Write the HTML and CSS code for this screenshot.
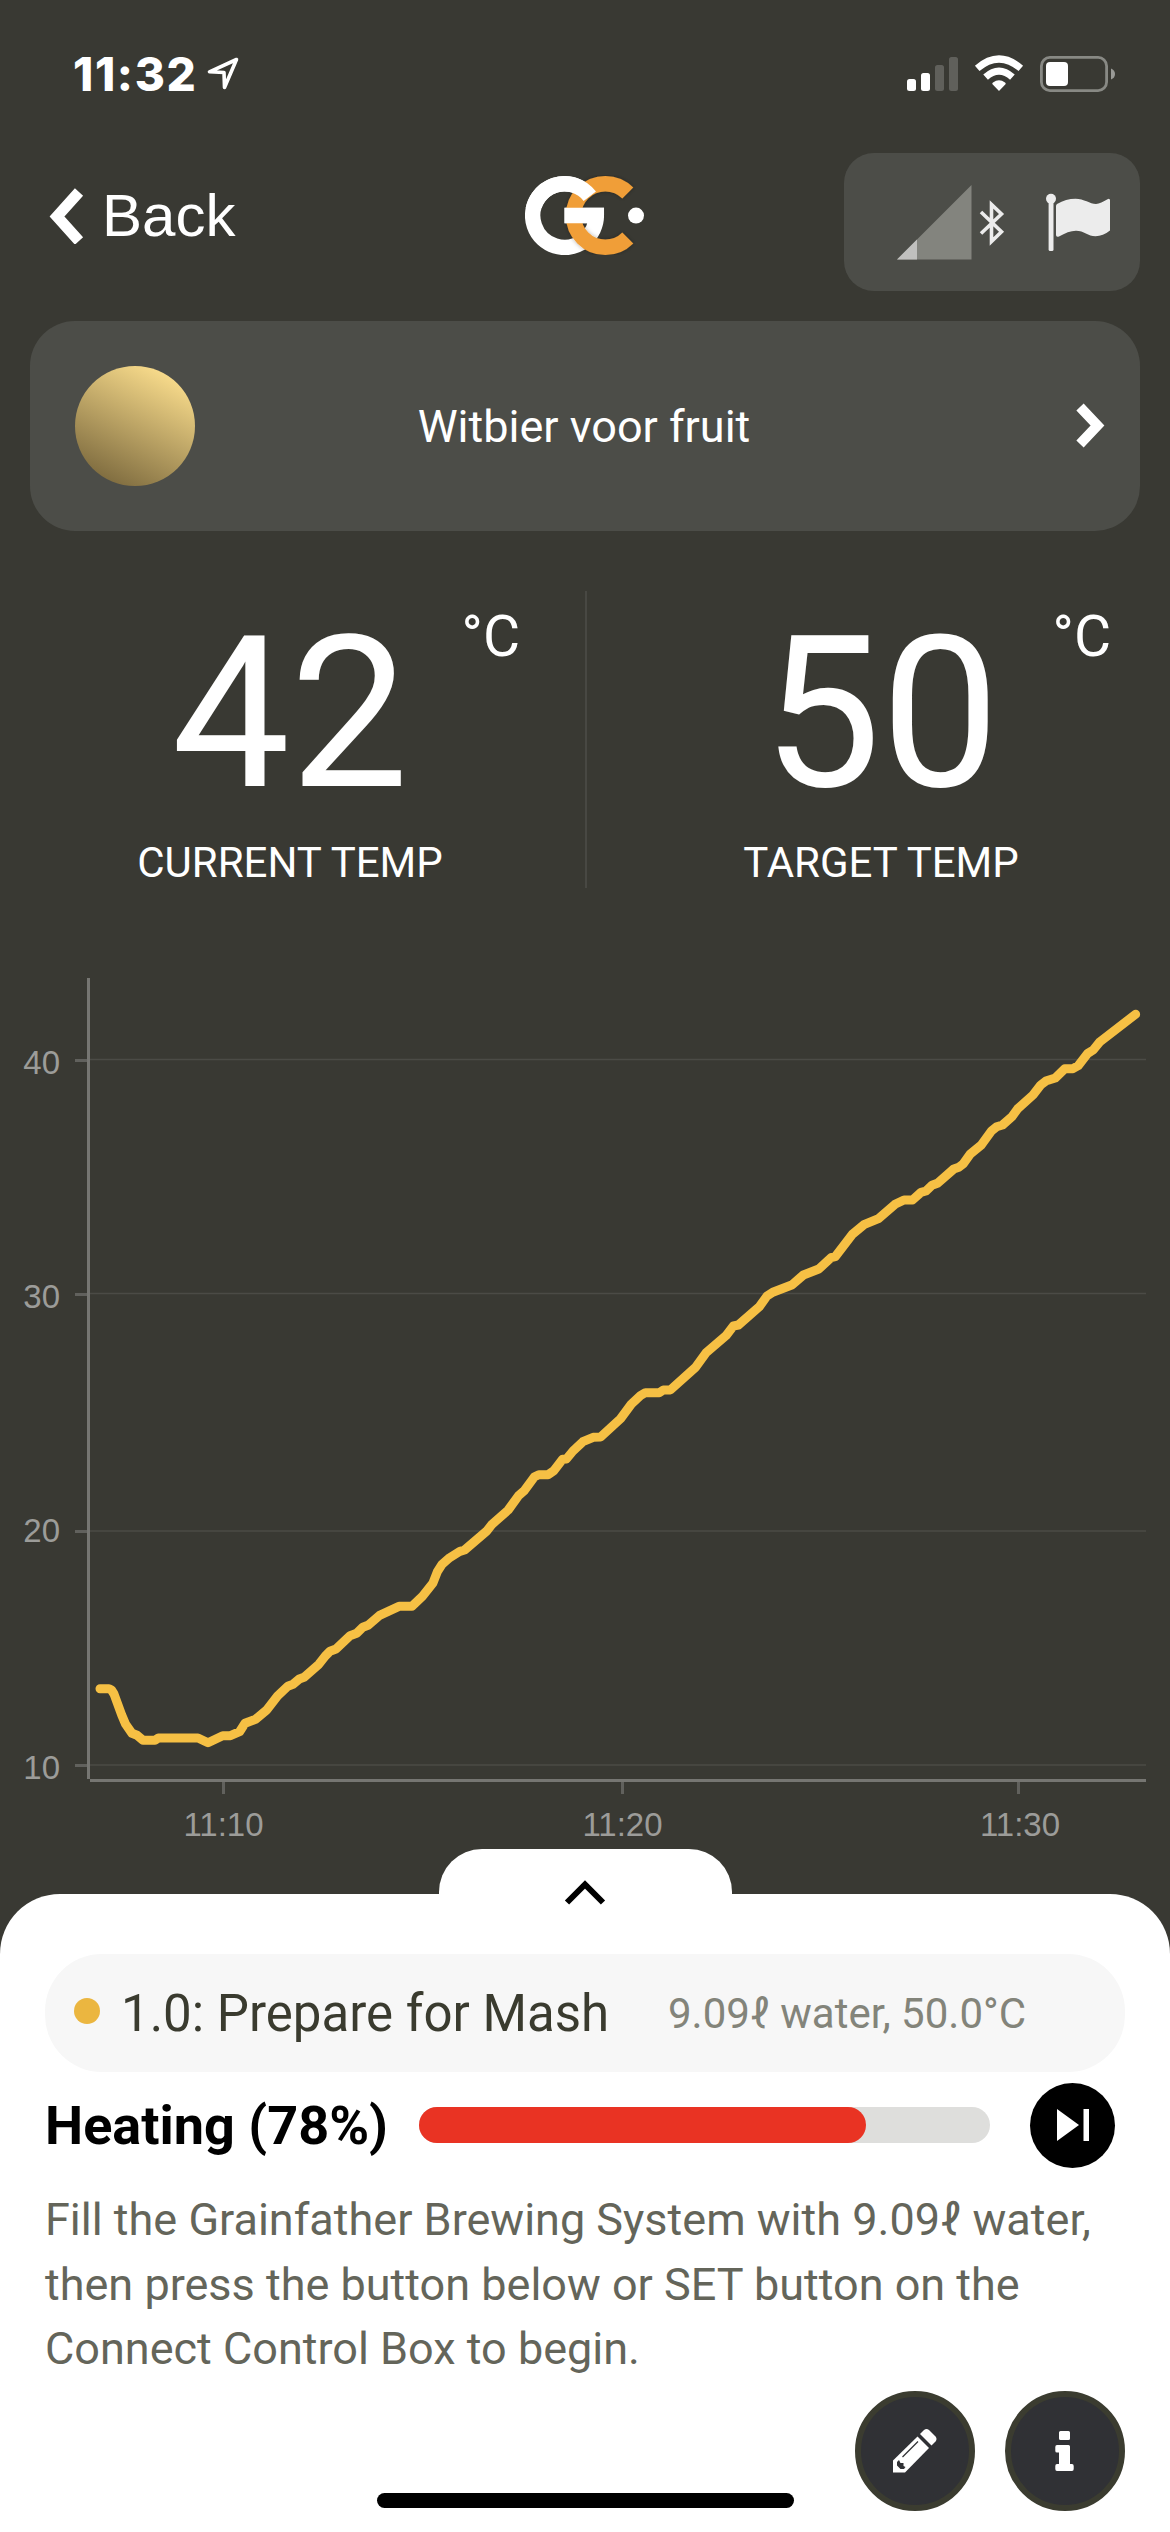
FILE: index.html
```
<!DOCTYPE html>
<html lang="en">
<head>
    <meta charset="UTF-8">
    <meta name="viewport" content="width=device-width, initial-scale=1.0">
    <title>Brew Session</title>
    <link rel="stylesheet" href="styles.css">
</head>
<body>
    <div class="status-bar">
        <div class="clock">
            <span class="time">11:32</span>
            <svg class="location" width="32" height="33" viewBox="0 0 32 33"><path d="M29.5 2.5 2.5 14.8 17 15.5 17.5 30.5Z" fill="none" stroke="#fff" stroke-width="3.6" stroke-linejoin="round"/></svg>
        </div>
        <svg class="status-icons" width="210" height="38" viewBox="906 55 210 38">
            <g fill="#fff">
                <rect x="907" y="79" width="9" height="12" rx="2.5"/>
                <rect x="921" y="73" width="9" height="18" rx="2.5"/>
                <rect x="935" y="65" width="9" height="26" rx="2.5" opacity=".2"/>
                <rect x="949" y="57" width="9" height="34" rx="2.5" opacity=".2"/>
                <path d="M999 91 992.5 84.2Q991.8 83.2 993 82.4Q999 78.2 1005 82.4Q1006.2 83.2 1005.5 84.2Z"/>
            </g>
            <path d="M985.6 77.2Q999 65.2 1012.4 77.2M977.2 68.4Q999 49.6 1020.8 68.4" fill="none" stroke="#fff" stroke-width="7"/>
            <rect x="1041.4" y="57.4" width="65.2" height="33.2" rx="8.5" fill="none" stroke="#888984" stroke-width="2.8"/>
            <rect x="1046" y="62" width="22" height="24" rx="4" fill="#fff"/>
            <path d="M1111 68.5Q1115 70 1115 74T1111 79.5Z" fill="#999a96"/>
        </svg>
    </div>

    <div class="header">
        <a class="back">
            <svg width="36" height="56" viewBox="0 0 36 56"><path d="M31 4 9 28.500 31 53" fill="none" stroke="#fff" stroke-width="11"/></svg>
            <span>Back</span>
        </a>
        <svg class="logo" width="120" height="80" viewBox="525 175 120 80">
            <defs>
                <filter id="shade" x="-20%" y="-20%" width="140%" height="140%">
                    <feDropShadow dx="0" dy="0" stdDeviation="2" flood-color="#000" flood-opacity=".3"/>
                </filter>
                <clipPath id="ring-top"><rect x="525" y="175" width="120" height="33"/></clipPath>
            </defs>
            <path d="M564.5 215.5H596.3A31.8 31.8 0 1 1 589.8 196.3" fill="none" stroke="#fff" stroke-width="15.5"/>
            <path filter="url(#shade)" d="M627.8 193A31.8 31.8 0 1 0 627.8 238" fill="none" stroke="#f09e38" stroke-width="15.5"/>
            <path clip-path="url(#ring-top)" d="M532.7 215.5A31.8 31.8 0 0 1 589.8 196.3" fill="none" stroke="#fff" stroke-width="15.5"/>
            <path d="M564.5 207.8H604V217L600 223.3H564.5Z" fill="#fff"/>
            <circle cx="636" cy="215.6" r="8" fill="#fff"/>
        </svg>
        <div class="connection">
            <svg width="270" height="80" viewBox="870 180 270 80">
                <path d="M897 259.5 971.5 185V259.5Z" fill="#83847e"/>
                <path d="M897 259.5 917 239.5V259.5Z" fill="#c0c0be"/>
                <path d="M981 212 1001.5 231.8 991.5 241.5V204.5L1001.5 214 981 233.5" fill="none" stroke="#ececec" stroke-width="3.6"/>
                <g fill="#ececec">
                    <circle cx="1051" cy="198.8" r="5"/>
                    <rect x="1048.6" y="199" width="4.9" height="52" rx="1.5"/>
                    <path d="M1056 206Q1056 204.8 1057 204Q1066 198.8 1075.5 198.8C1084 198.8 1090 204 1096 204Q1101 203.5 1107.5 199.3Q1110 198 1110 200.5V230.5Q1103 236.2 1095.5 236.2C1088 236.2 1084 230.7 1076 230.7Q1068 231 1059 236.5Q1056 237.5 1056 235Z"/>
                </g>
            </svg>
        </div>
    </div>

    <div class="recipe">
        <div class="beer"></div>
        <div class="recipe-name">Witbier voor fruit</div>
        <svg width="32" height="46" viewBox="0 0 32 46"><path d="M6 4 23.500 22.500 6 41" fill="none" stroke="#fff" stroke-width="10"/></svg>
    </div>

    <div class="temps">
        <div class="temp current">
            <div class="value">42</div>
            <div class="unit">°C</div>
            <div class="label">CURRENT TEMP</div>
        </div>
        <div class="temp target">
            <div class="value">50</div>
            <div class="unit">°C</div>
            <div class="label">TARGET TEMP</div>
        </div>
    </div>

    <svg class="chart" width="1170" height="879" viewBox="0 970 1170 879">
        <!-- grid -->
        <path d="M90 1059.5H1146M90 1293.5H1146M90 1531H1146M90 1765H1146" stroke="#4b4b46" stroke-width="1.5"/>
        <!-- ticks -->
        <path d="M75 1060.5H90M75 1294.5H90M75 1531.5H90M75 1765.5H90M223.5 1779V1794M622.5 1779V1794M1018.5 1779V1794" stroke="#61615d" stroke-width="3"/>
        <!-- axes -->
        <path d="M88.5 978V1779M90 1780.5H1146" stroke="#767672" stroke-width="3"/>
        <g class="axis-y">
            <text x="60" y="1074">40</text>
            <text x="60" y="1308">30</text>
            <text x="60" y="1542">20</text>
            <text x="60" y="1779">10</text>
        </g>
        <g class="axis-x">
            <text x="223.5" y="1836">11:10</text>
            <text x="622.5" y="1836">11:20</text>
            <text x="1020" y="1836">11:30</text>
        </g>
        <polyline class="temp-line" points="
            100,1688.7 109,1688.7 111.5,1690 114,1694 121.7,1715 125.5,1724 132,1733.3 137,1735.3 143,1740.3 155,1740.3
            158.4,1738 198,1738 208,1742.7 222.7,1735.7 230.4,1735.7 239.6,1731.7 245,1723.3 249,1721.7 255.6,1719.3 266.7,1710
            277.5,1696 287.8,1686.3 293,1684.3 299.3,1679 304,1677.3 318.8,1664.3 325.3,1656 330,1651.3 336,1649 350,1635.7
            356.7,1633.3 362.8,1627.3 368,1625.3 379.6,1615.3 399,1606.3 412,1606.3 422.5,1596.3 432.8,1583.3 437.4,1571.7 442,1564.3
            449.7,1557.7 460,1551.3 464.6,1550 486.8,1531 492,1524.3 508.2,1510 518.6,1495.7 524.3,1490.7 534.6,1476.7 538.8,1474.7
            548,1474.7 553.8,1470.7 562.6,1459.3 566.4,1459 573,1451 582.9,1441.7 593.2,1437.3 600.6,1437 620.5,1418.7 631.2,1404.3
            640.8,1395.3 645.4,1392.7 659.2,1392.7 663.4,1390 670.3,1390 695.5,1367.3 706.2,1352.7 726,1335.7 733.4,1326 738.4,1325
            759.4,1306.7 767,1296 772.8,1292.3 792.3,1284.7 803.4,1275 818.8,1269 831,1257.7 835.2,1256.7 852.4,1234.3 863.9,1224.7
            878.5,1218.7 895,1204.3 904,1200 912.5,1200 921,1192.3 926,1191 932,1185.3 937.4,1183.3 953.8,1169 958.8,1167.3
            963.4,1163.7 970,1154.3 981,1145.3 991.7,1130.7 996.7,1126.7 1002.5,1125 1012,1116.7 1017.8,1108.7 1033,1095 1040.7,1085
            1046.5,1080.7 1055.3,1078 1064.8,1068.7 1072.9,1068.7 1078.2,1065.7 1087.8,1053.3 1093.2,1050 1100,1041.7 1135.6,1014.3"/>
    </svg>

    <div class="sheet-tab">
        <svg width="42" height="26" viewBox="0 0 42 26"><path d="M3 22.5 21 4.5 39 22.5" fill="none" stroke="#000" stroke-width="6"/></svg>
    </div>
    <div class="sheet">
        <div class="step">
            <span class="dot"></span>
            <span class="step-name">1.0: Prepare for Mash</span>
            <span class="step-info">9.09ℓ water, 50.0°C</span>
        </div>
        <div class="heating">
            <span class="heating-label">Heating (78%)</span>
            <div class="progress"><div class="progress-fill" style="width: 78.2%"></div></div>
            <button class="skip">
                <svg width="34" height="32" viewBox="0 0 34 32"><path d="M1 0 23 16 1 32ZM27.5 0H33V32H27.5Z" fill="#fff"/></svg>
            </button>
        </div>
        <p class="instructions">Fill the Grainfather Brewing System with 9.09ℓ water, then press the button below or SET button on the Connect Control Box to begin.</p>
        <div class="actions">
            <button class="round">
                <svg width="44" height="44" viewBox="0 0 44 44">
                    <path d="M0 31.5 24.5 7.5 36 19 12 43.5H0Z" fill="#fff"/>
                    <path d="M27 5 31 1Q33.5-1 36 1L42.5 7.5Q44.5 10 42.5 12.5L38.5 16.5Z" fill="#fff"/>
                    <path d="M9.5 28 25 12.5" stroke="#303135" stroke-width="1.3"/>
                    <path d="M4 33 6 31 7.5 34H10.5V37L12.500 38 11 40H7.5L4 36.5Z" fill="#303135"/>
                </svg>
            </button>
            <button class="round">
                <svg width="20" height="42" viewBox="0 0 20 42">
                    <path d="M5.5 1H13.5Q15 1 15 2.5V8.5Q15 10 13.5 10H5.5Q4 10 4 8.5V2.5Q4 1 5.5 1ZM2 15H13.5Q15 15 15 16.5V34H17Q18.7 34 18.7 36V39Q18.7 41 17 41H2Q.3 41 .3 39V36Q.3 34 2 34H4V22.5H2Q.3 22.5 .3 21V17Q.3 15 2 15Z" fill="#fff"/>
                </svg>
            </button>
        </div>
        <div class="home-indicator"></div>
    </div>
</body>
</html>
```
FILE: styles.css
```
* {
    box-sizing: border-box;
    margin: 0;
    padding: 0;
}

body {
    width: 1170px;
    height: 2532px;
    overflow: hidden;
    display: flex;
    flex-direction: column;
    background: #393933;
    color: #fff;
    font-family: Roboto, sans-serif;
}

svg {
    display: block;
    flex-shrink: 0;
}

button {
    border: none;
}

/* Status bar */
.status-bar {
    display: flex;
    justify-content: space-between;
    align-items: flex-start;
    height: 153px;
    padding: 55px 54px 0 73px;
}

.clock {
    display: flex;
}

.time {
    width: 134px;
    font: 800 46px/38px Inter, sans-serif;
    letter-spacing: 1.6px;
}

.location {
    margin-top: 2px;
}

/* Header */
.header {
    display: grid;
    grid-template-columns: 1fr 120px 1fr;
    height: 138px;
    padding: 0 30px 0 48px;
}

.back {
    display: flex;
    align-items: center;
    gap: 18px;
    padding-bottom: 12px;
    font: 60px/70px "Liberation Sans", sans-serif;
}

.logo {
    margin-top: 22px;
    margin-left: -9px;
}

.connection {
    justify-self: end;
    width: 296px;
    height: 138px;
    padding: 27px 0 0 26px;
    border-radius: 30px;
    background: #4c4d48;
}

/* Recipe card */
.recipe {
    display: flex;
    align-items: center;
    height: 210px;
    margin: 30px 30px 0;
    padding: 0 34px 0 45px;
    border-radius: 45px;
    background: #4c4d48;
}

.beer {
    width: 120px;
    height: 120px;
    border-radius: 50%;
    background: linear-gradient(28deg, #756339 5%, #f8db8b 88%);
}

.recipe-name {
    flex: 1;
    padding-right: 101px;
    text-align: center;
    font-size: 45px;
}

/* Temperatures */
.temps {
    display: flex;
    height: 297px;
    margin: 60px 0 82px;
}

.temp {
    position: relative;
    flex: 1;
    text-align: center;
}

.current {
    flex: 0 0 587px;
    padding-right: 5px;
    border-right: 2px solid #484843;
}

.target {
    padding-left: 5px;
}

.value {
    height: 241px;
    font-size: 211px;
    line-height: 246px;
}

.unit {
    position: absolute;
    top: 12px;
    right: 65px;
    font-size: 57px;
    line-height: 67px;
}

.target .unit {
    right: 59px;
}

.label {
    font-size: 42px;
    line-height: 62px;
}

/* Chart */
.chart text {
    fill: #9c9c99;
    font: 33px "Liberation Sans", sans-serif;
}

.axis-y {
    text-anchor: end;
}

.axis-x {
    text-anchor: middle;
}

.temp-line {
    fill: none;
    stroke: #f6c044;
    stroke-width: 9;
    stroke-linecap: round;
    stroke-linejoin: round;
}

/* Bottom sheet */
.sheet-tab {
    display: flex;
    justify-content: center;
    align-self: center;
    width: 293px;
    height: 45px;
    padding-top: 31px;
    border-radius: 43px 43px 0 0;
    background: #fff;
    z-index: 1;
}

.sheet {
    flex: 1;
    padding: 60px 45px 0;
    border-radius: 60px 60px 0 0;
    background: #fff;
    color: #000;
}

.step {
    display: flex;
    align-items: center;
    height: 118px;
    padding-left: 29px;
    border-radius: 57px;
    background: #f7f7f7;
}

.dot {
    width: 26px;
    height: 26px;
    margin: 0 21px 4px 0;
    border-radius: 50%;
    background: #ebb640;
}

.step-name {
    width: 547px;
    font-size: 51px;
    color: #3a3b2f;
}

.step-info {
    font-size: 42px;
    color: #83847a;
}

.heating {
    display: flex;
    align-items: center;
    height: 106px;
}

.heating-label {
    width: 374px;
    font-size: 54px;
    font-weight: bold;
}

.progress {
    width: 571px;
    height: 36px;
    margin-right: 40px;
    border-radius: 18px;
    background: #dededc;
}

.progress-fill {
    height: 36px;
    border-radius: 18px;
    background: #e93323;
}

.skip {
    display: flex;
    align-items: center;
    justify-content: center;
    width: 85px;
    height: 85px;
    border-radius: 50%;
    background: #000;
}

.instructions {
    height: 203px;
    padding-top: 10px;
    font-size: 45px;
    line-height: 64.5px;
    color: #64655a;
}

.actions {
    display: flex;
    justify-content: flex-end;
    gap: 30px;
    padding-top: 10px;
}

.round {
    display: flex;
    align-items: center;
    justify-content: center;
    width: 120px;
    height: 120px;
    border: 6px solid #3b3c30;
    border-radius: 50%;
    background: #303135;
}

.home-indicator {
    width: 417px;
    height: 15px;
    margin: -18px auto 0;
    border-radius: 8px;
    background: #000;
}
```
